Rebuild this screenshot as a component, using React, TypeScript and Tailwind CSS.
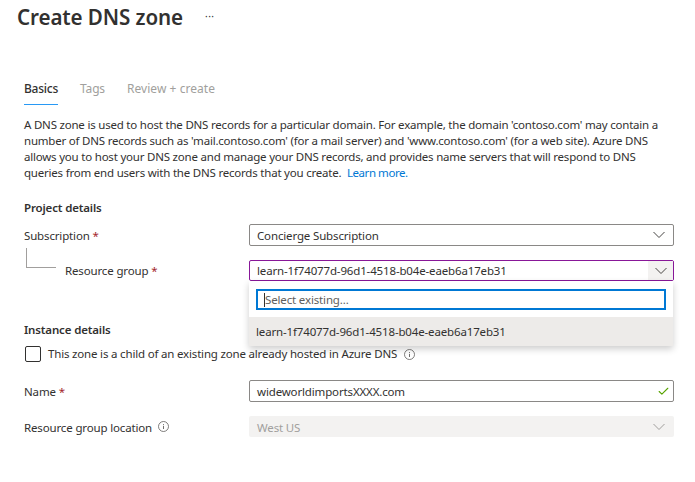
import { Check } from "lucide-react";

function Star() {
  return <span className="text-[#a4262c]">*</span>;
}

function Chevron({ className }: { className?: string }) {
  return (
    <svg width="16" height="16" viewBox="0 0 16 16" fill="none" className={className}>
      <path d="M2.5 5 8 10.5 13.5 5" stroke="currentColor" strokeWidth="1" />
    </svg>
  );
}

function InfoIcon() {
  return (
    <svg width="11" height="11" viewBox="0 0 11 11" fill="none" className="text-[#605e5c]">
      <circle cx="5.5" cy="5.5" r="5" stroke="currentColor" strokeWidth="0.8" />
      <path d="M5.5 4.8v3.2M5.5 3v.9" stroke="currentColor" strokeWidth="0.9" />
    </svg>
  );
}

export default function App() {
  return (
    <div className="w-[695px] h-[482px] overflow-hidden bg-white text-[#323130] font-['Noto_Sans',sans-serif] text-[11.5px] leading-[16px] tracking-[-0.15px]">
      <div className="flex items-center h-[34px] pl-[17px]">
        <h1 className="text-[20.6px] leading-[34px] font-semibold tracking-[-0.1px] text-[#323130]">Create DNS zone</h1>
        <span className="ml-[22px] mb-[3px] text-[10px] leading-none tracking-[0.5px] text-[#323130]">···</span>
      </div>

      <div className="flex gap-[21px] pl-[24px] mt-[45px] h-[26px] text-[12px]">
        <div className="w-[34px] h-[26px] border-b-[1.5px] border-[#2899f5] font-medium whitespace-nowrap pt-[2px] tracking-[-0.25px]">Basics</div>
        <div className="text-[#a19f9d] pt-[2px] ml-[1px]">Tags</div>
        <div className="text-[#a19f9d] pt-[2px] ml-[1px] tracking-[0.05px]">Review + create</div>
      </div>

      <p className="mx-[24px] mt-[12px] w-[650px] whitespace-nowrap tracking-[-0.21px]">
        A DNS zone is used to host the DNS records for a particular domain. For example, the domain 'contoso.com' may contain a<br />
        number of DNS records such as 'mail.contoso.com' (for a mail server) and 'www.contoso.com' (for a web site). Azure DNS<br />
        allows you to host your DNS zone and manage your DNS records, and provides name servers that will respond to DNS<br />
        queries from end users with the DNS records that you create.&nbsp; <span className="text-[#0078d4] tracking-[-0.45px]">Learn more.</span>
      </p>

      <h2 className="pl-[24px] mt-[18px] pt-px font-semibold">Project details</h2>

      <div className="flex items-center justify-between pl-[24px] pr-[21px] mt-[8px]">
        <div className="pt-[2px]">Subscription <Star /></div>
        <div className="w-[425px] h-[22px] border border-[#8a8886] rounded-[2px] flex items-center justify-between pl-[7px] pr-[6px]">
          <span className="pt-[2px]">Concierge Subscription</span>
          <Chevron className="text-[#484644]" />
        </div>
      </div>

      <div className="flex items-start justify-between pr-[21px] mt-[14px]">
        <div className="flex items-start pl-[26px]">
          <div className="w-[30px] h-[20px] -mt-[12px] border-l border-b border-[#a19f9d]" />
          <div className="ml-[9px] mt-[3px]">Resource group <Star /></div>
        </div>
        <div className="relative w-[425px]">
          <div className="h-[21px] border border-[#881798] rounded-[2px] flex items-center justify-between pl-[7px]">
            <span className="pt-px">learn-1f74077d-96d1-4518-b04e-eaeb6a17eb31</span>
            <span className="w-[25px] h-full bg-[#f3f2f1] flex items-center justify-center">
              <Chevron className="text-[#484644]" />
            </span>
          </div>
          <div className="absolute left-0 top-[21px] w-[424px] h-[65px] bg-white shadow-[0_3px_7px_rgba(0,0,0,0.2)] z-10">
            <div className="h-[36px] pt-[8px] px-[7px]">
              <div className="h-[21px] border-2 border-[#0078d4] flex items-center">
                <span className="w-px h-[14px] ml-[6px] bg-[#323130]" />
                <span className="text-[#605e5c]">Select existing...</span>
              </div>
            </div>
            <div className="h-[29px] bg-[#edebe9] flex items-center pl-[7px]">learn-1f74077d-96d1-4518-b04e-eaeb6a17eb31</div>
          </div>
        </div>
      </div>

      <h2 className="pl-[24px] mt-[40px] pt-px font-semibold">Instance details</h2>

      <div className="flex items-center pl-[25px] mt-[8px]">
        <div className="w-[16px] h-[16px] border border-[#323130] rounded-[2px]" />
        <span className="ml-[7px] tracking-[-0.18px]">This zone is a child of an existing zone already hosted in Azure DNS</span>
        <span className="ml-[7px]"><InfoIcon /></span>
      </div>

      <div className="flex items-center justify-between pl-[24px] pr-[21px] mt-[18px]">
        <div className="pt-[2px]">Name <Star /></div>
        <div className="w-[425px] h-[22px] border border-[#8a8886] rounded-[2px] flex items-center justify-between pl-[7px] pr-[3px]">
          <span className="pt-[2px]">wideworldimportsXXXX.com</span>
          <Check size={13} strokeWidth={2} className="text-[#57a300]" />
        </div>
      </div>

      <div className="flex items-center justify-between pl-[24px] pr-[21px] mt-[14px]">
        <div className="flex items-center"><span className="pt-[2px]">Resource group location</span><span className="ml-[6px]"><InfoIcon /></span></div>
        <div className="w-[425px] h-[21px] bg-[#f3f2f1] rounded-[2px] flex items-center justify-between pl-[8px] pr-[7px] text-[#a19f9d]">
          <span className="pt-[2px]">West US</span>
          <Chevron className="text-[#a19f9d]" />
        </div>
      </div>
    </div>
  );
}
